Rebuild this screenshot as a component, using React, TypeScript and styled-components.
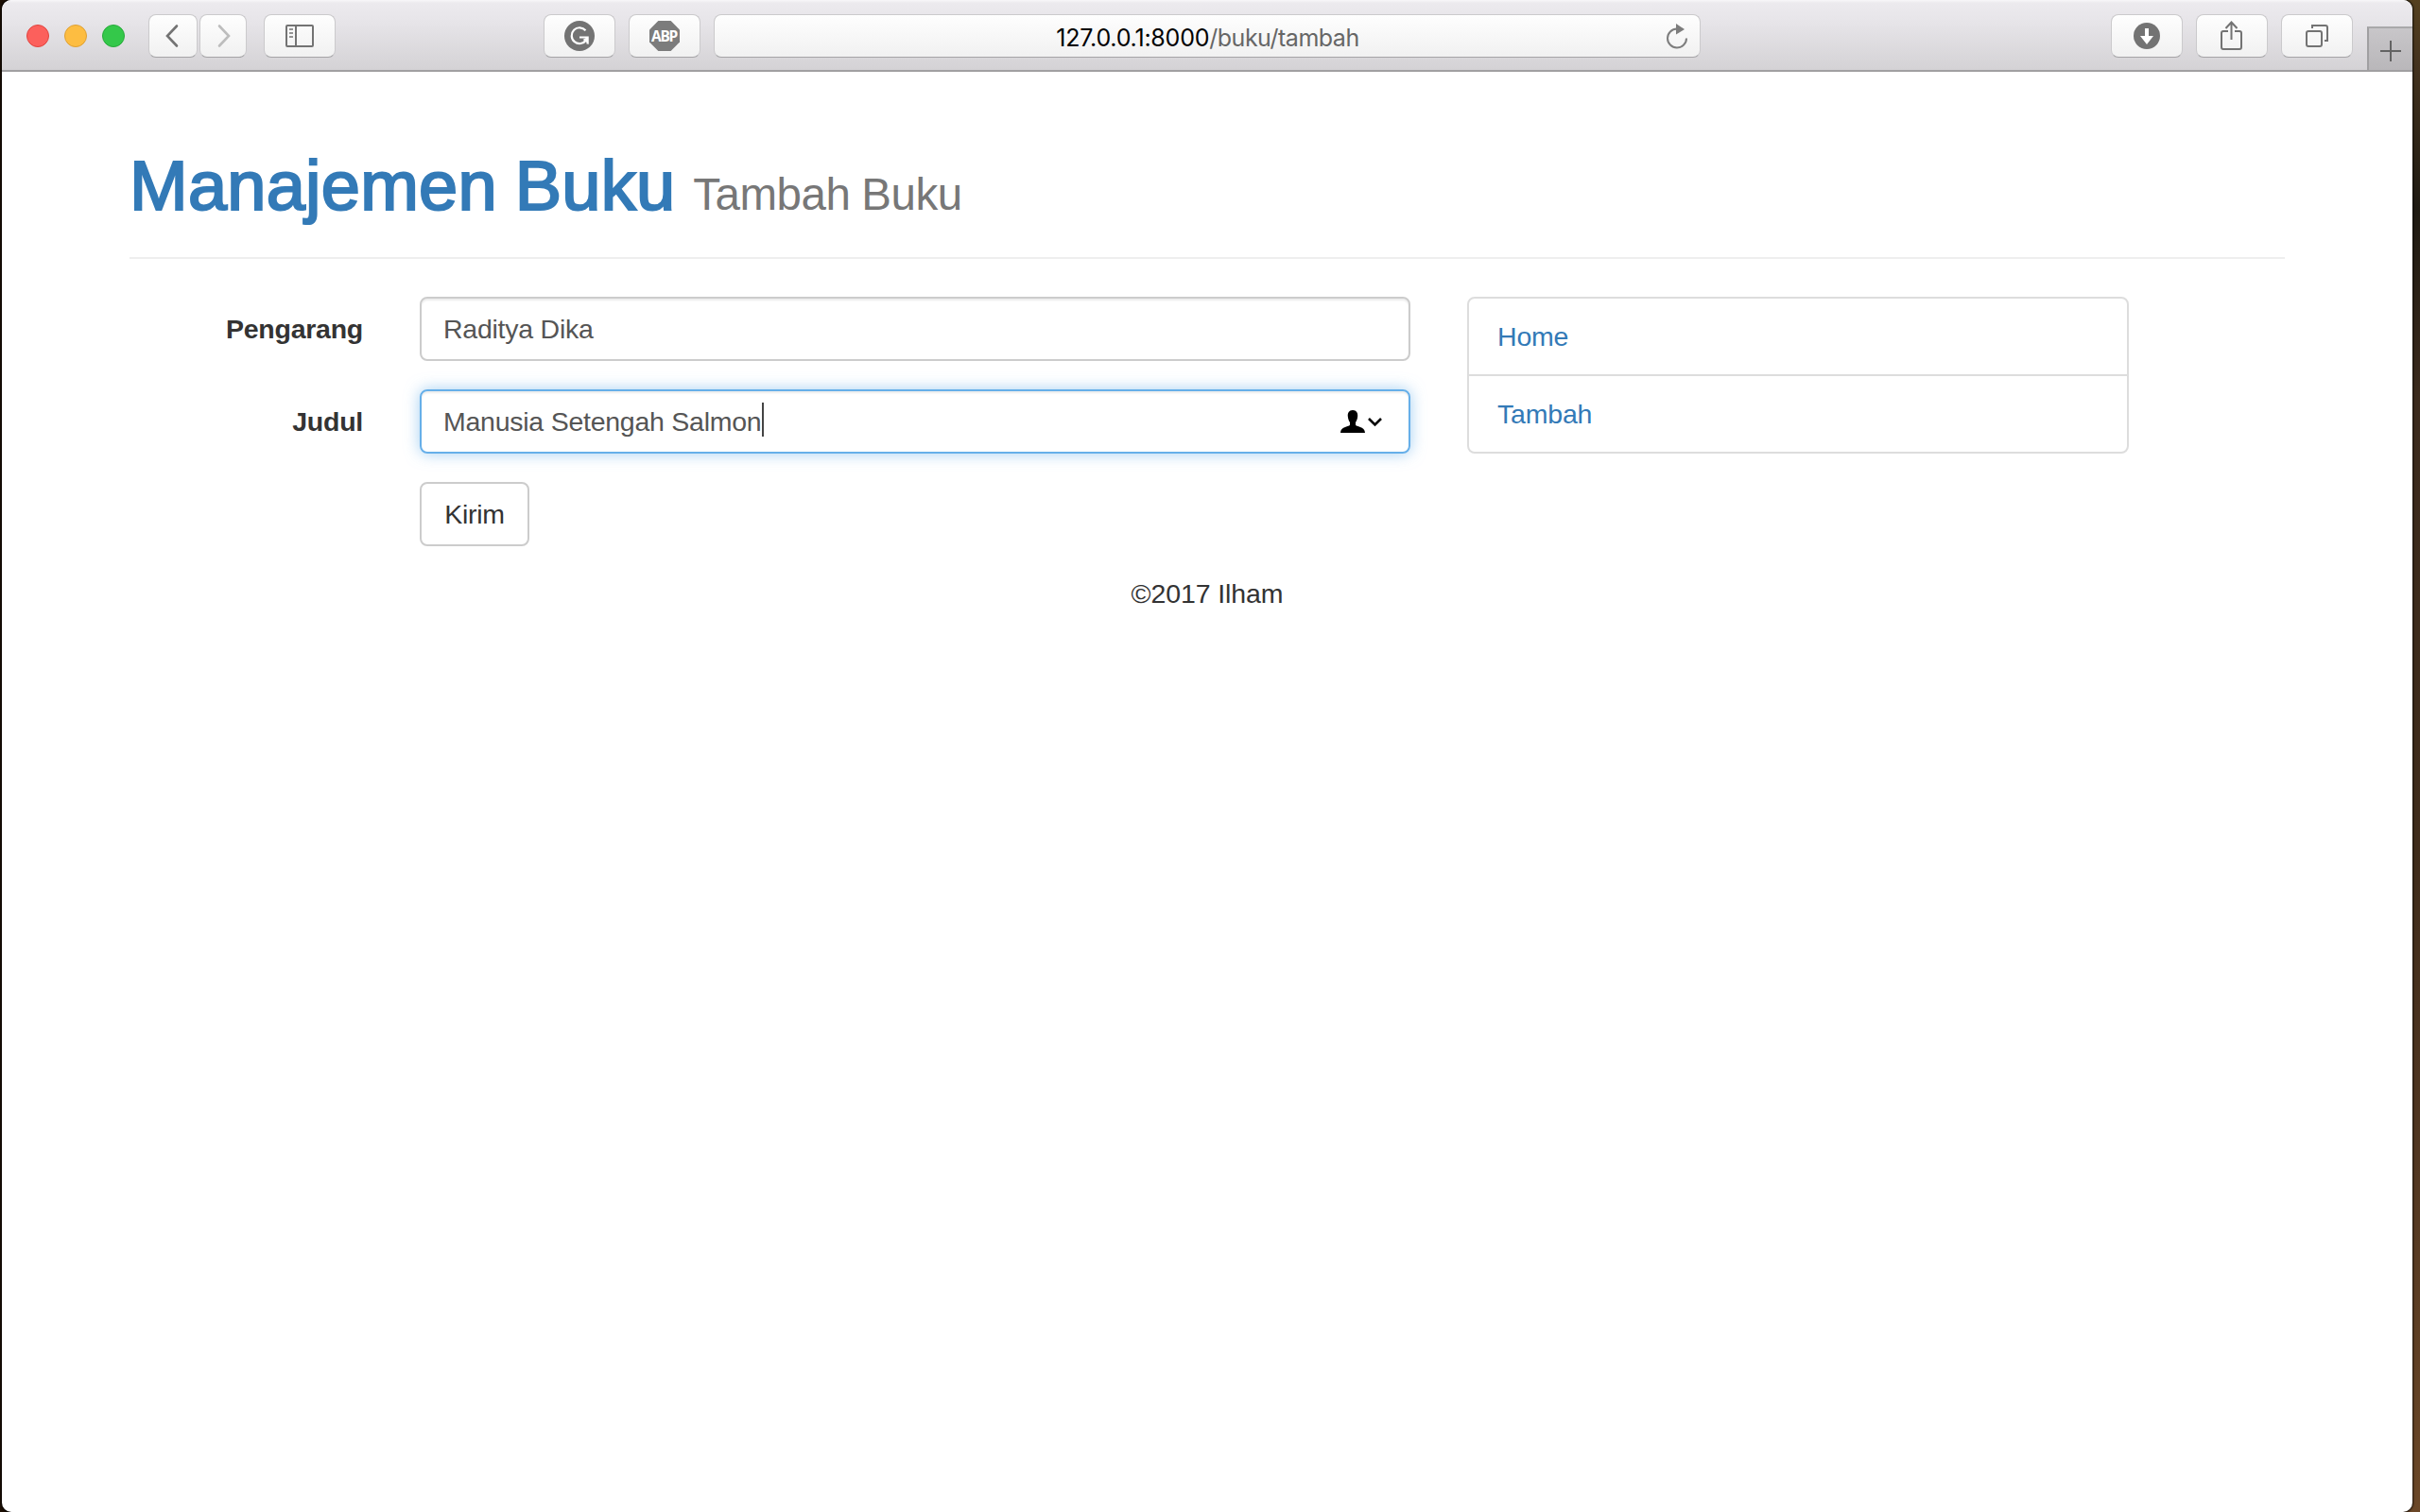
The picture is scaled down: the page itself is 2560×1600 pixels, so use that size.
import React from "react";
import styled, { createGlobalStyle } from "styled-components";

const GlobalStyle = createGlobalStyle`
  * { box-sizing: border-box; }
  html, body { margin: 0; padding: 0; }
  body { overflow: hidden; }
`;

const Desktop = styled.div`
  width: 2560px;
  height: 1600px;
  padding: 0 8px 0 2px;
  background: linear-gradient(90deg, #1c0f04 0 50%, transparent 50%),
    linear-gradient(180deg, #54401f 0, #46341f 60px, #1e1a12 220px, #3b2a1d 420px, #3f2c1b 900px, #503621 1200px, #6b4727 1600px);
  font-family: "Liberation Sans", Arial, sans-serif;
`;

const Window = styled.div`
  height: 1600px;
  display: flex;
  flex-direction: column;
  background: #fff;
  border-radius: 10px;
  overflow: hidden;
  box-shadow: 0 0 2px 1px rgba(0, 0, 0, 0.75);
`;

const Toolbar = styled.header`
  height: 76px;
  flex: none;
  display: flex;
  align-items: flex-start;
  padding: 15px 0 0 26px;
  border-bottom: 2px solid #a09fa1;
  background: linear-gradient(180deg, #f8f7f9 0, #eceaee 3px, #e7e5e9 22px, #d4d2d5 74px);
`;

const Lights = styled.div`
  display: flex;
  gap: 16px;
  padding-top: 11px;
  margin-right: 25px;
`;

const Light = styled.span<{ $fill: string; $rim: string }>`
  width: 24px;
  height: 24px;
  border-radius: 50%;
  background: ${(p) => p.$fill};
  border: 1px solid ${(p) => p.$rim};
`;

const surface = `
  height: 46px;
  border: 1px solid #cbcacc;
  border-bottom-color: #a5a4a6;
  border-radius: 8px;
  background: linear-gradient(180deg, #fefefe, #f1f1f1);
`;

const ToolButton = styled.button<{ $width?: number; $before?: number }>`
  ${surface}
  width: ${(p) => p.$width ?? 76}px;
  margin: 0 0 0 ${(p) => p.$before ?? 14}px;
  padding: 0;
  flex: none;
  display: flex;
  align-items: center;
  justify-content: center;
`;

const Address = styled.div`
  ${surface}
  flex: none;
  width: 1044px;
  margin-left: 14px;
  padding-right: 12px;
  display: grid;
  grid-template-columns: 37px 1fr 24px;
  align-items: center;
  text-align: center;
  font: 25px/44px Inter, sans-serif;
  color: #000;
`;

const Url = styled.span`
  letter-spacing: -0.22px;
  white-space: nowrap;
  padding-top: 2px;
`;

const Path = styled.span`
  color: #666;
  letter-spacing: -0.5px;
`;

const NewTab = styled.div`
  margin: 13px 0 0 auto;
  width: 48px;
  height: 46px;
  border-left: 2px solid #a09fa1;
  border-top: 2px solid #a9a8aa;
  background: linear-gradient(180deg, #c8c6c9, #b9b7ba);
  display: flex;
  align-items: center;
  justify-content: center;
  padding-top: 3px;
`;

const Page = styled.main`
  padding: 80px 135px 0;
  color: #333;
  font-size: 28.5px;
  line-height: 40px;
  letter-spacing: -0.25px;
`;

const PageHeader = styled.div`
  height: 118px;
  border-bottom: 2px solid #eee;
  margin-bottom: 40px;
  padding-top: 1px;
`;

const Title = styled.h1`
  margin: 0;
  font-size: 74px;
  line-height: 80px;
  font-weight: 400;
  color: #337ab7;
  -webkit-text-stroke: 2.2px #337ab7;
  white-space: nowrap;
  letter-spacing: 0.25px;
  word-spacing: -2px;
`;

const Subtitle = styled.small`
  font-size: 47.5px;
  color: #777;
  -webkit-text-stroke: 0;
  letter-spacing: -0.45px;
  word-spacing: -1px;
`;

const Columns = styled.div`
  display: flex;
  align-items: flex-start;
  gap: 60px;
`;

const Form = styled.form`
  width: 1355px;
  display: grid;
  grid-template-columns: 247px 1048px;
  column-gap: 60px;
  row-gap: 30px;
`;

const Label = styled.label`
  font-weight: 700;
  text-align: right;
  padding-top: 14px;
`;

const Field = styled.div<{ $focused?: boolean }>`
  height: 68px;
  display: flex;
  align-items: center;
  padding: 0 28px 0 23px;
  color: #555;
  border: 2px solid ${(p) => (p.$focused ? "#66afe9" : "#ccc")};
  border-radius: 8px;
  box-shadow: inset 0 2px 2px rgba(0, 0, 0, 0.075)
    ${(p) => (p.$focused ? ", 0 0 16px rgba(102, 175, 233, 0.6)" : "")};
`;

const Text = styled.span`
  white-space: nowrap;
`;

const Caret = styled.span`
  width: 2px;
  height: 36px;
  margin: 0 auto 4px 1px;
  background: #444;
`;

const Submit = styled.button`
  grid-column: 2;
  justify-self: start;
  width: 116px;
  height: 68px;
  padding: 0;
  border: 2px solid #ccc;
  border-radius: 8px;
  background: #fff;
  color: #333;
  font: 28.5px/40px "Liberation Sans", Arial, sans-serif;
  letter-spacing: -0.25px;
`;

const Menu = styled.nav`
  width: 700px;
  border: 2px solid #ddd;
  border-radius: 8px;
  letter-spacing: -0.2px;
`;

const MenuLink = styled.a`
  display: block;
  height: 80px;
  padding: 20px 30px 0;
  color: #337ab7;
  & + & {
    height: 82px;
    border-top: 2px solid #ddd;
  }
`;

const Footer = styled.footer`
  margin-top: 30px;
  text-align: center;
  letter-spacing: -0.1px;
`;

const Drawing = styled.svg`
  flex: none;
  overflow: visible;
`;

const Octagon = styled.span`
  width: 32px;
  height: 32px;
  flex: none;
  display: flex;
  align-items: center;
  justify-content: center;
  background: #7c7c7c;
  clip-path: polygon(29.300% 0, 70.700% 0, 100% 29.300%, 100% 70.700%, 70.700% 100%, 29.300% 100%, 0 70.700%, 0 29.300%);
  color: #fff;
  font: 700 15.5px/22px "Open Sans", sans-serif;
  letter-spacing: -1.300px;
  padding-right: 1px;
`;

const Icon = ({ w, h, children }: { w: number; h: number; children: React.ReactNode }) => (
  <Drawing width={w} height={h} viewBox={`0 0 ${w} ${h}`} fill="none">
    {children}
  </Drawing>
);

const ink = "#737373";

export default function App() {
  return (
    <Desktop>
      <GlobalStyle />
      <Window>
        <Toolbar>
          <Lights>
            <Light $fill="#fc605c" $rim="#e0443f" />
            <Light $fill="#fdbd41" $rim="#dea034" />
            <Light $fill="#34c84a" $rim="#27a93a" />
          </Lights>
          <ToolButton $width={52} $before={0}>
            <Icon w={16} h={24}><path d="M12 1.500 2 12l10 10.500" stroke={ink} strokeWidth="2.600" strokeLinecap="round" /></Icon>
          </ToolButton>
          <ToolButton $width={50} $before={2}>
            <Icon w={14} h={24}><path d="M3 1.500 13 12 3 22.500" stroke="#bdbdbd" strokeWidth="2.600" strokeLinecap="round" /></Icon>
          </ToolButton>
          <ToolButton $before={18}>
            <Icon w={30} h={24}>
              <rect x="1" y="1" width="28" height="22" rx="1" stroke={ink} strokeWidth="2" />
              <path d="M11 1v22" stroke={ink} strokeWidth="2" />
              <path d="M4 5h4M4 9h4M4 13h4" stroke={ink} strokeWidth="1.600" />
            </Icon>
          </ToolButton>
          <ToolButton $before={220}>
            <Icon w={32} h={32}>
              <circle cx="16" cy="16" r="16" fill={ink} />
              <path d="M22.500 10.200A8.400 8.400 0 1 0 23 20.500" stroke="#fff" strokeWidth="2.200" />
              <path d="M16 17.500h8.500v7" stroke="#fff" strokeWidth="2" />
              <path d="M25.500 16.500v8.500l-3-3.500-3-1.500z" fill="#fff" />
            </Icon>
          </ToolButton>
          <ToolButton>
            <Octagon>ABP</Octagon>
          </ToolButton>
          <Address>
            <span />
            <Url>127.0.0.1:8000<Path>/buku/tambah</Path></Url>
            <Icon w={24} h={28}>
              <path d="M12 5.500a10 10 0 1 0 10 10" stroke="#7d7d7d" strokeWidth="2" />
              <path d="M11 0l9 6-9 5.500z" fill="#7d7d7d" />
            </Icon>
          </Address>
          <ToolButton $before={434}>
            <Icon w={28} h={28}>
              <circle cx="14" cy="14" r="14" fill={ink} />
              <path d="M12 6h4v8h5l-7 9-7-9h5z" fill="#fff" />
            </Icon>
          </ToolButton>
          <ToolButton>
            <Icon w={24} h={32}>
              <path d="M8 11H3a2 2 0 0 0-2 2v15a2 2 0 0 0 2 2h17a2 2 0 0 0 2-2V13a2 2 0 0 0-2-2h-5M11.500 20V2M5.500 8l6-6.500 6 6.500" stroke={ink} strokeWidth="2" />
            </Icon>
          </ToolButton>
          <ToolButton>
            <Icon w={24} h={24}>
              <rect x="1" y="7" width="16" height="16" rx="2" stroke={ink} strokeWidth="2" />
              <path d="M7 4V1h14a2 2 0 0 1 2 2v14h-3" stroke={ink} strokeWidth="2" />
            </Icon>
          </ToolButton>
          <NewTab>
            <Icon w={22} h={22}><path d="M0 11h22M11 0v22" stroke="#636363" strokeWidth="2" /></Icon>
          </NewTab>
        </Toolbar>
        <Page>
          <PageHeader>
            <Title>Manajemen Buku <Subtitle>Tambah Buku</Subtitle></Title>
          </PageHeader>
          <Columns>
            <Form>
              <Label>Pengarang</Label>
              <Field><Text>Raditya Dika</Text></Field>
              <Label>Judul</Label>
              <Field $focused>
                <Text>Manusia Setengah Salmon</Text>
                <Caret />
                <Icon w={44} h={24}>
                  <path d="M13 0c4 0 5.500 3 5.200 6.500-.2 3-1.200 5-2.200 6.500v2.500c0 2 10 1.500 10 8.500H0c0-7 10-6.500 10-8.500V13C9 11.500 8 9.500 7.800 6.500 7.500 3 9 0 13 0z" fill="#000" />
                  <path d="M30 9l6.500 6.500L43 9" stroke="#000" strokeWidth="2.600" />
                </Icon>
              </Field>
              <Submit type="button">Kirim</Submit>
            </Form>
            <Menu>
              <MenuLink>Home</MenuLink>
              <MenuLink>Tambah</MenuLink>
            </Menu>
          </Columns>
          <Footer>©2017 Ilham</Footer>
        </Page>
      </Window>
    </Desktop>
  );
}
